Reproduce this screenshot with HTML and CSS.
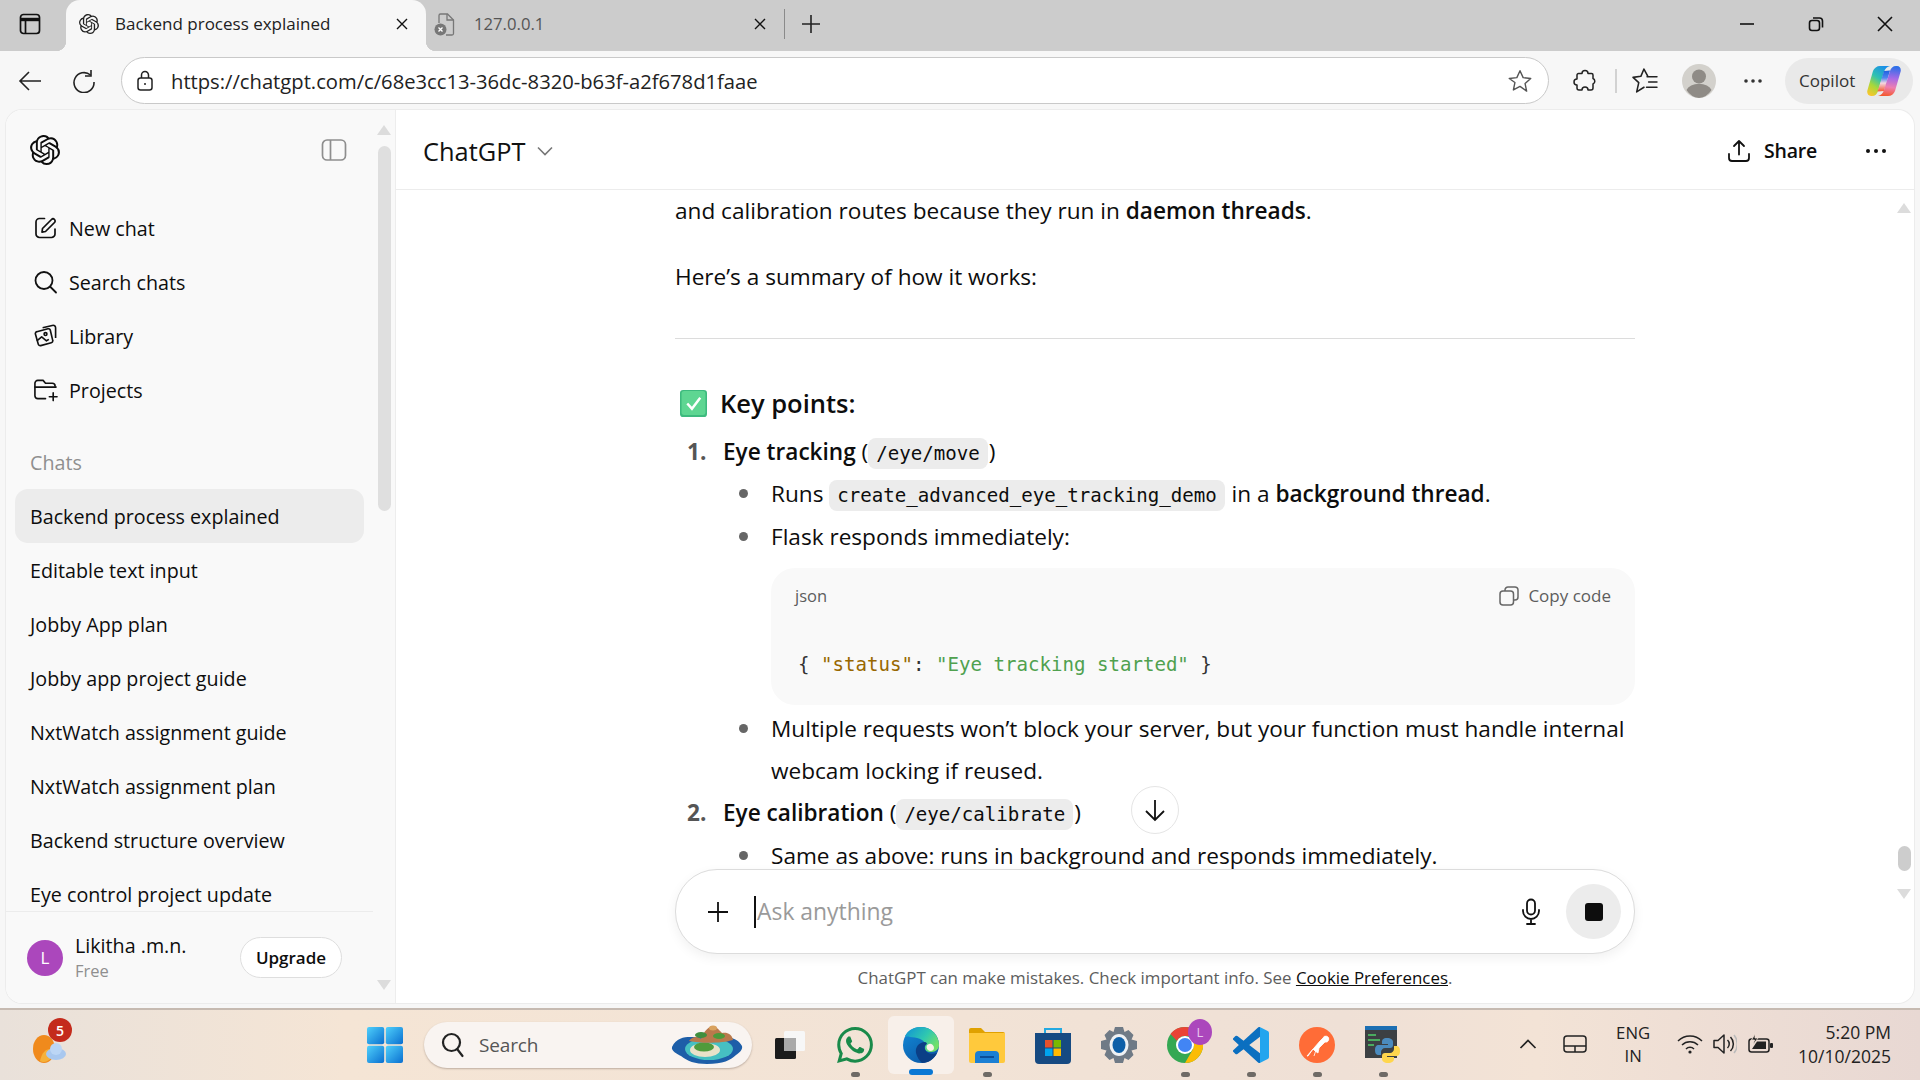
FILE: index.html
```html
<!DOCTYPE html>
<html lang="en">
<head>
<meta charset="utf-8">
<title>Backend process explained</title>
<link rel="stylesheet" href="styles.css">
</head>
<body>
<svg class="defs" width="0" height="0">
  <defs>
    <symbol id="blossom" viewBox="0 0 24 24"><path fill="currentColor" d="M22.2819 9.8211a5.9847 5.9847 0 0 0-.5157-4.9108 6.0462 6.0462 0 0 0-6.5098-2.9A6.0651 6.0651 0 0 0 4.9807 4.1818a5.9847 5.9847 0 0 0-3.9977 2.9 6.0462 6.0462 0 0 0 .7427 7.0966 5.98 5.98 0 0 0 .511 4.9107 6.051 6.051 0 0 0 6.5146 2.9001A5.9847 5.9847 0 0 0 13.2599 24a6.0557 6.0557 0 0 0 5.7718-4.2058 5.9894 5.9894 0 0 0 3.9977-2.9001 6.0557 6.0557 0 0 0-.7475-7.0729zm-9.022 12.6081a4.4755 4.4755 0 0 1-2.8764-1.0408l.1419-.0804 4.7783-2.7582a.7948.7948 0 0 0 .3927-.6813v-6.7369l2.02 1.1686a.071.071 0 0 1 .038.052v5.5826a4.504 4.504 0 0 1-4.4945 4.4944zm-9.6607-4.1254a4.4708 4.4708 0 0 1-.5346-3.0137l.142.0852 4.783 2.7582a.7712.7712 0 0 0 .7806 0l5.8428-3.3685v2.3324a.0804.0804 0 0 1-.0332.0615L9.74 19.9502a4.4992 4.4992 0 0 1-6.1408-1.6464zM2.3408 7.8956a4.485 4.485 0 0 1 2.3655-1.9728V11.6a.7664.7664 0 0 0 .3879.6765l5.8144 3.3543-2.0201 1.1685a.0757.0757 0 0 1-.071 0l-4.8303-2.7865A4.504 4.504 0 0 1 2.3408 7.872zm16.5963 3.8558L13.1038 8.364 15.1192 7.2a.0757.0757 0 0 1 .071 0l4.8303 2.7913a4.4944 4.4944 0 0 1-.6765 8.1042v-5.6772a.79.79 0 0 0-.407-.667zm2.0107-3.0231l-.142-.0852-4.7735-2.7818a.7759.7759 0 0 0-.7854 0L9.409 9.2297V6.8974a.0662.0662 0 0 1 .0284-.0615l4.8303-2.7866a4.4992 4.4992 0 0 1 6.6802 4.66zM8.3065 12.863l-2.02-1.1638a.0804.0804 0 0 1-.038-.0567V6.0742a4.4992 4.4992 0 0 1 7.3757-3.4537l-.142.0805L8.704 5.459a.7948.7948 0 0 0-.3927.6813zm1.0976-2.3654l2.602-1.4998 2.6069 1.4998v2.9994l-2.5974 1.4997-2.6067-1.4997Z"/></symbol>
  </defs>
</svg>

<header class="tabstrip">
  <svg class="tab-toggle" width="22" height="22" viewBox="0 0 22 22" fill="none" stroke="#111" stroke-width="1.7"><rect x="1.5" y="1.5" width="19" height="19" rx="3"/><path d="M1.5 6.5h19" stroke-width="3.4"/><path d="M6.5 6.5v14"/></svg>
  <div class="tab tab-active">
    <svg class="tab-favicon" width="20" height="20"><use href="#blossom"/></svg>
    <span class="tab-title">Backend process explained</span>
    <svg class="tab-close" width="14" height="14" viewBox="0 0 14 14" stroke="#111" stroke-width="1.4"><path d="M2 2l10 10M12 2L2 12"/></svg>
  </div>
  <div class="tab tab-idle">
    <svg class="tab-favicon" width="22" height="24" viewBox="0 0 22 24" fill="none"><path d="M5 11V3.5A1.5 1.5 0 0 1 6.500 2h7l6 6v13.500a1.500 1.500 0 0 1-1.500 1.500h-6" stroke="#777" stroke-width="1.300"/><path d="M13 2v6h6.500" stroke="#777" stroke-width="1.300"/><circle cx="6.500" cy="17.500" r="6" fill="#777"/><path d="M4.500 15.500l4 4m0-4l-4 4" stroke="#fff" stroke-width="1.300"/></svg>
    <span class="tab-title tab-title-idle">127.0.0.1</span>
    <svg class="tab-close" width="14" height="14" viewBox="0 0 14 14" stroke="#111" stroke-width="1.4"><path d="M2 2l10 10M12 2L2 12"/></svg>
  </div>
  <span class="tab-divider"></span>
  <svg class="tab-new" width="20" height="20" viewBox="0 0 20 20" stroke="#222" stroke-width="1.600"><path d="M10 1v18M1 10h18"/></svg>
  <div class="win-controls">
    <svg width="16" height="16" viewBox="0 0 16 16" stroke="#111" stroke-width="1.600"><path d="M1 8h14"/></svg>
    <svg width="16" height="16" viewBox="0 0 16 16" fill="none" stroke="#111" stroke-width="1.600"><rect x="1.500" y="4.500" width="10" height="10" rx="2.500"/><path d="M5 2h6.500A3 3 0 0 1 14.500 5v6.500"/></svg>
    <svg width="16" height="16" viewBox="0 0 16 16" stroke="#111" stroke-width="1.600"><path d="M1 1l14 14M15 1L1 15"/></svg>
  </div>
</header>

<nav class="toolbar">
  <svg class="tool-back" width="24" height="24" viewBox="0 0 24 24" fill="none" stroke="#222" stroke-width="1.600"><path d="M23 12H2M11 3l-9 9 9 9"/></svg>
  <svg class="tool-reload" width="24" height="24" viewBox="0 0 24 24" fill="none" stroke="#222" stroke-width="1.600"><path d="M18.500 6A10 10 0 1 0 22 13"/><path d="M19 1v6h-6"/></svg>
  <div class="address">
    <svg class="addr-lock" width="18" height="22" viewBox="0 0 18 22" fill="none" stroke="#222" stroke-width="1.500"><rect x="2" y="8" width="14" height="12" rx="2.500"/><path d="M5.500 8V5a3.500 3.500 0 0 1 7 0v3"/><circle cx="9" cy="14" r="1" fill="#222" stroke="none"/></svg>
    <span class="addr-url">https://chatgpt.com/c/68e3cc13-36dc-8320-b63f-a2f678d1faae</span>
    <svg class="addr-star" width="26" height="26" viewBox="0 0 24 24" fill="none" stroke="#555" stroke-width="1.300" stroke-linejoin="round"><path d="M12 2.500l2.900 6.400 7 .8-5.200 4.700 1.400 6.900L12 17l-6.100 3.300 1.400-6.900L2.100 9.700l7-.8z"/></svg>
  </div>
  <svg class="tool-puzzle" width="24" height="24" viewBox="0 0 24 24" fill="none" stroke="#222" stroke-width="1.500" stroke-linejoin="round"><path d="M9 4.500a3 3 0 0 1 6 0h3.500a1.500 1.500 0 0 1 1.500 1.500v3.500a3 3 0 0 1 0 5.500V19a2 2 0 0 1-2 2h-3a3 3 0 0 0-6 0H6a2 2 0 0 1-2-2v-3a3 3 0 0 1 0-6V6a1.500 1.500 0 0 1 1.500-1.500z"/></svg>
  <span class="tool-divider"></span>
  <svg class="tool-favs" width="26" height="26" viewBox="0 0 25 25" fill="none" stroke="#222" stroke-width="1.500" stroke-linejoin="round" stroke-linecap="round"><path d="M15 7.500L11.500 1 8.500 8 1 9l5.500 5L4.500 23l7-4.500"/><path d="M14.500 8.500H24M16 13.500h8M14 18.500h10"/></svg>
  <span class="tool-avatar">
    <svg width="34" height="34" viewBox="0 0 34 34"><circle cx="17" cy="17" r="17" fill="#d3d1cc"/><circle cx="17" cy="12.500" r="7" fill="#8f8b86"/><path d="M4.500 26a13 8.500 0 0 1 25 0A17 17 0 0 1 17 34 17 17 0 0 1 4.500 26z" fill="#8f8b86"/></svg>
  </span>
  <svg class="tool-more" width="20" height="6" viewBox="0 0 20 6" fill="#333"><circle cx="3" cy="3" r="1.800"/><circle cx="10" cy="3" r="1.800"/><circle cx="17" cy="3" r="1.800"/></svg>
  <div class="copilot">
    <span class="copilot-label">Copilot</span>
    <svg width="34" height="32" viewBox="0 0 34 32">
      <defs>
        <linearGradient id="cpA" x1=".7" y1="0" x2=".2" y2="1"><stop offset="0" stop-color="#1a8fe8"/><stop offset=".4" stop-color="#30c2b0"/><stop offset=".7" stop-color="#a8d83a"/><stop offset="1" stop-color="#f7c62b"/></linearGradient>
        <linearGradient id="cpB" x1=".5" y1="0" x2=".4" y2="1"><stop offset="0" stop-color="#2a6fe8"/><stop offset=".4" stop-color="#a86ae6"/><stop offset=".7" stop-color="#ee7fb0"/><stop offset="1" stop-color="#f4582f"/></linearGradient>
        <linearGradient id="cpC" x1=".5" y1="0" x2=".5" y2="1"><stop offset="0" stop-color="#1f5fe0"/><stop offset=".35" stop-color="#4f86ee"/><stop offset=".6" stop-color="#f5d6e2"/><stop offset="1" stop-color="#f4582f"/></linearGradient>
      </defs>
      <path d="M13 1h10c-3 .5-5 3-6 6L11 26c-.8 3-3 5-6 5H4c-3 0-4.500-3-3.500-6L6 6c1-3 4-5 7-5z" fill="url(#cpA)"/>
      <path d="M17 6l6-.5L17 26l-6.500.5z" fill="url(#cpC)"/>
      <path d="M21 31H11c3-.5 5-3 6-6L23 6c.8-3 3-5 6-5h1c3 0 4.500 3 3.500 6L28 26c-1 3-4 5-7 5z" fill="url(#cpB)"/>
    </svg>
  </div>
</nav>

<div class="app">
  <aside class="sidebar">
    <div class="side-body">
      <div class="side-head">
        <svg width="30" height="30" class="side-logo"><use href="#blossom"/></svg>
        <svg width="26" height="24" viewBox="0 0 26 24" fill="none" stroke="#8e8e8e" stroke-width="1.700"><rect x="1.500" y="2" width="23" height="20" rx="4.500"/><path d="M9.500 2v20"/></svg>
      </div>
      <ul class="side-nav">
        <li class="side-item"><svg width="24" height="24" viewBox="0 0 24 24" fill="none" stroke="#111" stroke-width="1.700" stroke-linecap="round" stroke-linejoin="round"><path d="M11 2.500H6A3.500 3.500 0 0 0 2.500 6v12A3.500 3.500 0 0 0 6 21.500h12a3.500 3.500 0 0 0 3.500-3.500v-5"/><path d="M9 12.500L18 3.500a2.100 2.100 0 0 1 3 3l-9 9-3.500.6z"/></svg><span>New chat</span></li>
        <li class="side-item"><svg width="24" height="24" viewBox="0 0 24 24" fill="none" stroke="#111" stroke-width="1.800" stroke-linecap="round"><circle cx="10.500" cy="10.500" r="8.500"/><path d="M17 17l5.500 5.500"/></svg><span>Search chats</span></li>
        <li class="side-item"><svg width="26" height="26" viewBox="0 0 26 26" fill="none" stroke="#111" stroke-width="1.700" stroke-linejoin="round"><path d="M4 8.500l11.500-3a2 2 0 0 1 2.500 1.500l2.500 10.500a2 2 0 0 1-1.500 2.500L8 23a2 2 0 0 1-2.500-1.500L2.500 11A2 2 0 0 1 4 8.500z"/><path d="M10 4.500L20 2c2-.5 3.500.5 3.500 2.500V15"/><circle cx="13" cy="11" r="1.500"/><path d="M4 18l5-4 5 4 2.500-1.500"/></svg><span>Library</span></li>
        <li class="side-item"><svg width="26" height="24" viewBox="0 0 26 24" fill="none" stroke="#111" stroke-width="1.700" stroke-linecap="round" stroke-linejoin="round"><path d="M13 21H5a3 3 0 0 1-3-3V5a3 3 0 0 1 3-3h5.500l2.500 3h7a3 3 0 0 1 3 3"/><path d="M2 9h22"/><path d="M21 15v8M17 19h8"/></svg><span>Projects</span></li>
      </ul>
      <div class="side-label">Chats</div>
      <ul class="side-chats">
        <li class="chat-item chat-active">Backend process explained</li>
        <li class="chat-item">Editable text input</li>
        <li class="chat-item">Jobby App plan</li>
        <li class="chat-item">Jobby app project guide</li>
        <li class="chat-item">NxtWatch assignment guide</li>
        <li class="chat-item">NxtWatch assignment plan</li>
        <li class="chat-item">Backend structure overview</li>
        <li class="chat-item">Eye control project update</li>
      </ul>
      <div class="side-user">
        <span class="user-avatar">L</span>
        <div class="user-meta">
          <span class="user-name">Likitha .m.n.</span>
          <span class="user-plan">Free</span>
        </div>
        <span class="upgrade">Upgrade</span>
      </div>
    </div>
    <div class="side-scroll">
      <span class="arrow-up"></span>
      <span class="side-thumb"></span>
      <span class="side-spacer"></span>
      <span class="arrow-down"></span>
    </div>
  </aside>

  <main class="main">
    <div class="main-head">
      <div class="model"><span>ChatGPT</span><svg width="16" height="10" viewBox="0 0 16 10" fill="none" stroke="#777" stroke-width="1.600"><path d="M1 1.500l7 7 7-7"/></svg></div>
      <div class="main-actions">
        <div class="share">
          <svg width="24" height="24" viewBox="0 0 24 24" fill="none" stroke="#111" stroke-width="1.800" stroke-linecap="round" stroke-linejoin="round"><path d="M12 15.500V2M7 7l5-5 5 5"/><path d="M2 15v4a3 3 0 0 0 3 3h14a3 3 0 0 0 3-3v-4"/></svg>
          <span>Share</span>
        </div>
        <svg width="22" height="6" viewBox="0 0 22 6" fill="#111"><circle cx="3" cy="3" r="2"/><circle cx="11" cy="3" r="2"/><circle cx="19" cy="3" r="2"/></svg>
      </div>
    </div>

    <article class="thread">
      <p class="para">and calibration routes because they run in <strong>daemon threads</strong>.</p>
      <p class="para para-next">Here’s a summary of how it works:</p>
      <hr class="rule">
      <h3 class="heading">
        <svg width="27" height="27" viewBox="0 0 26 26"><rect x="0" y="0" width="26" height="26" rx="3" fill="#3dba7e"/><rect x="1.500" y="1" width="23" height="23" rx="2.500" fill="#5ed692"/><path d="M7 13l4.500 5L19.500 7.500" fill="none" stroke="#fff" stroke-width="2.400"/></svg>
        <span>Key points:</span>
      </h3>
      <ol class="steps">
        <li class="step"><span class="step-num">1.</span><strong>Eye tracking</strong> (<code class="inline">/eye/move</code>)</li>
        <li class="bullet">Runs <code class="inline">create_advanced_eye_tracking_demo</code> in a <strong>background thread</strong>.</li>
        <li class="bullet bullet-gap">Flask responds immediately:</li>
        <li class="codeblock">
          <div class="code-head">
            <span>json</span>
            <span class="copy"><svg width="20" height="20" viewBox="0 0 20 20" fill="none" stroke="#666" stroke-width="1.500"><rect x="1" y="5" width="13.500" height="14" rx="3"/><path d="M6 5V4a3 3 0 0 1 3-3h6.500A3 3 0 0 1 19 4v7a3 3 0 0 1-3 3h-1.500"/></svg>Copy code</span>
          </div>
          <pre class="code"><span>{ </span><span class="c-key">"status"</span><span>: </span><span class="c-str">"Eye tracking started"</span><span> }</span></pre>
        </li>
        <li class="bullet bullet-after">Multiple requests won’t block your server, but your function must handle internal webcam locking if reused.</li>
        <li class="step"><span class="step-num">2.</span><strong>Eye calibration</strong> (<code class="inline">/eye/calibrate</code>)</li>
        <li class="bullet bullet-last">Same as above: runs in background and responds immediately.</li>
      </ol>
    </article>

    <div class="composer">
      <svg class="comp-plus" width="22" height="22" viewBox="0 0 22 22" stroke="#111" stroke-width="1.800"><path d="M11 1v20M1 11h20"/></svg>
      <span class="caret"></span>
      <span class="placeholder">Ask anything</span>
      <svg class="comp-mic" width="20" height="28" viewBox="0 0 20 28" fill="none" stroke="#111" stroke-width="1.800" stroke-linecap="round"><rect x="6" y="1.500" width="8" height="15" rx="4"/><path d="M2 12v1a8 8 0 0 0 16 0v-1M10 21v5M6 26h8"/></svg>
      <span class="stop"><span class="stop-square"></span></span>
    </div>
    <p class="disclaimer">ChatGPT can make mistakes. Check important info. See <a class="cookie">Cookie Preferences</a>.</p>

    <span class="jump"><svg width="22" height="24" viewBox="0 0 22 24" fill="none" stroke="#111" stroke-width="1.800"><path d="M11 2v20M2 13l9 9 9-9"/></svg></span>
    <div class="main-scroll">
      <span class="arrow-up"></span>
      <span class="main-track"></span>
      <span class="main-thumb"></span>
      <span class="main-gap"></span>
      <span class="arrow-down"></span>
    </div>
  </main>
</div>

<footer class="taskbar">
  <div class="weather">
    <svg width="34" height="32" viewBox="0 0 34 32"><ellipse cx="12" cy="17" rx="11" ry="14" fill="#f08a1c"/><path d="M12 30c5 0 9-5 10-12-5-3-12 0-14 11 1 .6 2.500 1 4 1z" fill="#f5b13a"/><ellipse cx="24" cy="22" rx="10" ry="6" fill="#a9c8ef"/><circle cx="24" cy="17" r="6" fill="#bcd6f5"/></svg>
    <span class="badge">5</span>
  </div>
  <svg class="start" width="36" height="36" viewBox="0 0 36 36"><defs><linearGradient id="win" x1="0" y1="0" x2="1" y2="1"><stop offset="0" stop-color="#4fd0fb"/><stop offset="1" stop-color="#0a6fd0"/></linearGradient></defs><rect x="0" y="0" width="17.200" height="17.200" rx="2" fill="url(#win)"/><rect x="18.800" y="0" width="17.200" height="17.200" rx="2" fill="url(#win)"/><rect x="0" y="18.800" width="17.200" height="17.200" rx="2" fill="url(#win)"/><rect x="18.800" y="18.800" width="17.200" height="17.200" rx="2" fill="url(#win)"/></svg>
  <div class="tb-search">
    <svg width="26" height="28" viewBox="0 0 26 28" fill="none" stroke="#222" stroke-width="2.200" stroke-linecap="round"><circle cx="11.500" cy="11.500" r="8.500"/><path d="M17.500 18.500l5 6.500"/></svg>
    <span class="tb-search-text">Search</span>
    <svg class="island" width="72" height="40" viewBox="0 0 72 40"><path d="M1 22c4-9 12-10 18-10h34c8 0 15 3 18 9 1 4-3 7-6 9-5 5-13 9-29 9-12 0-20-3-26-8-4-2-10-5-9-9z" fill="#1d5ea8"/><ellipse cx="38" cy="24" rx="24" ry="11" fill="#46c0c2"/><ellipse cx="34" cy="25" rx="15" ry="7" fill="#e9e2c9"/><ellipse cx="33" cy="22" rx="10" ry="4.500" fill="#4f9b3b"/><path d="M18 16c3-5 9-5 12-2 3-9 9-13 12-13 3 0 6 4 9 7 5-1 10 1 11 7-10 3-30 4-44 1z" fill="#b9794c"/><ellipse cx="30" cy="10" rx="6" ry="3" fill="#3f8f3e"/><ellipse cx="48" cy="11" rx="6" ry="3" fill="#4c9a3b"/><ellipse cx="42" cy="3" rx="4" ry="2.500" fill="#d9a25f"/></svg>
  </div>
  <svg class="task-view" width="30" height="28" viewBox="0 0 30 28"><rect x="9" y="0" width="21" height="20" rx="1.500" fill="#f7f7f7"/><rect x="0" y="7" width="21" height="21" rx="1.500" fill="#1b1b1b"/><rect x="9" y="7" width="12" height="13" fill="#a9a9a9"/></svg>
  <div class="tb-apps">
    <div class="tb-app">
      <svg width="36" height="36" viewBox="0 0 24 24"><path fill="#198a4a" d="M17.472 14.382c-.297-.149-1.758-.867-2.030-.967-.273-.099-.471-.148-.67.150-.197.297-.767.966-.940 1.164-.173.199-.347.223-.644.075-.297-.150-1.255-.463-2.390-1.475-.883-.788-1.480-1.761-1.653-2.059-.173-.297-.018-.458.130-.606.134-.133.298-.347.446-.520.149-.174.198-.298.298-.497.099-.198.050-.371-.025-.520-.075-.149-.669-1.612-.916-2.207-.242-.579-.487-.500-.669-.510-.173-.008-.371-.010-.570-.010-.198 0-.520.074-.792.372-.272.297-1.040 1.016-1.040 2.479 0 1.462 1.065 2.875 1.213 3.074.149.198 2.096 3.200 5.077 4.487.709.306 1.262.489 1.694.625.712.227 1.360.195 1.871.118.571-.085 1.758-.719 2.006-1.413.248-.694.248-1.289.173-1.413-.074-.124-.272-.198-.570-.347m-5.421 7.403h-.004a9.870 9.870 0 01-5.031-1.378l-.361-.214-3.741.982.998-3.648-.235-.374a9.860 9.860 0 01-1.510-5.260c.001-5.450 4.436-9.884 9.888-9.884 2.640 0 5.122 1.030 6.988 2.898a9.825 9.825 0 012.893 6.994c-.003 5.450-4.437 9.884-9.885 9.884m8.413-18.297A11.815 11.815 0 0012.050 0C5.495 0 .160 5.335.157 11.892c0 2.096.547 4.142 1.588 5.945L.057 24l6.305-1.654a11.882 11.882 0 005.683 1.448h.005c6.554 0 11.890-5.335 11.893-11.893a11.821 11.821 0 00-3.480-8.413Z"/></svg>
      <span class="tb-dot"></span>
    </div>
    <div class="tb-app tb-app-active">
      <svg width="36" height="36" viewBox="0 0 36 36"><defs><linearGradient id="edgeA" x1="0" y1="0" x2="1" y2=".6"><stop offset="0" stop-color="#0f90d8"/><stop offset=".6" stop-color="#2fc8b0"/><stop offset="1" stop-color="#72e06a"/></linearGradient><linearGradient id="edgeB" x1="0" y1="0" x2=".7" y2="1"><stop offset="0" stop-color="#128ad8"/><stop offset="1" stop-color="#0c5aa8"/></linearGradient></defs><circle cx="18" cy="18" r="18" fill="url(#edgeB)"/><path d="M2 9C5 3 11 0 18 0c11 0 18 9 18 18 0 4-3 7-8 7-4 0-7-2-6-5 1-3 0-5-3-7-6-4-14-2-17-4z" fill="url(#edgeA)"/><path d="M13 26c-1-6 3-11 9-11 1 0 2 1 2 2-2 1-3 3-2 5 1 4 6 6 12 4-3 6-8 10-15 10-3-3-5-6-6-10z" fill="#0b3f86"/><path d="M26 17a4 4 0 0 1 5 4c0 3-4 4-6 2s-2-5 1-6z" fill="#f8f0ea"/></svg>
      <span class="tb-bar"></span>
    </div>
    <div class="tb-app">
      <svg width="36" height="36" viewBox="0 0 36 36"><path d="M0 3a2 2 0 0 1 2-2h10l4 4h18a2 2 0 0 1 2 2v4H0z" fill="#e0a100"/><path d="M0 6h36v28a2 2 0 0 1-2 2H2a2 2 0 0 1-2-2z" fill="#ffc93c"/><path d="M6 36V28a4 4 0 0 1 4-4h16a4 4 0 0 1 4 4v8z" fill="#1b7fd4"/><rect x="11" y="29" width="14" height="2" fill="#0b4e99"/></svg>
      <span class="tb-dot"></span>
    </div>
    <div class="tb-app">
      <svg width="36" height="38" viewBox="0 0 36 38"><path d="M10 8V3h16v5" fill="none" stroke="#23a9e1" stroke-width="2"/><path d="M0 7h36v27a4 4 0 0 1-4 4H4a4 4 0 0 1-4-4z" fill="#164a82"/><rect x="10" y="14" width="7.500" height="7.500" fill="#e8512c"/><rect x="18.500" y="14" width="7.500" height="7.500" fill="#7ab800"/><rect x="10" y="22.500" width="7.500" height="7.500" fill="#00a4ef"/><rect x="18.500" y="22.500" width="7.500" height="7.500" fill="#ffb900"/></svg>
    </div>
    <div class="tb-app">
      <svg width="36" height="36" viewBox="0 0 36 36"><path d="M14 0h8l1.500 5 4-2 5 5-2 4.500L36 14v8l-5.500 1.500 2 4.500-5 5-4-2L22 36h-8l-1.500-5-4 2-5-5 2-4.500L0 22v-8l5.500-1.500-2-4.500 5-5 4 2z" fill="#6f7a86"/><ellipse cx="18" cy="18" rx="9.500" ry="11" fill="#eef1f4"/><ellipse cx="18" cy="18" rx="6.500" ry="8" fill="#0d5fa8"/></svg>
    </div>
    <div class="tb-app tb-app-chrome">
      <svg width="36" height="36" viewBox="0 0 36 36"><circle cx="18" cy="18" r="18" fill="#34a853"/><path d="M18 0a18 18 0 0 1 15.600 9H18a9 9 0 0 0-8 5L3.500 7A18 18 0 0 1 18 0z" fill="#ea4335"/><path d="M33.600 9A18 18 0 0 1 18 36l7.800-13.500A9 9 0 0 0 26 14z" fill="#fbbc04"/><circle cx="18" cy="18" r="9" fill="#fff"/><circle cx="18" cy="18" r="7" fill="#4285f4"/></svg>
      <span class="profile-badge">L</span>
      <span class="tb-dot"></span>
    </div>
    <div class="tb-app">
      <svg width="36" height="36" viewBox="0 0 24 24"><path fill="#23a5ee" d="M17 .3a1.500 1.500 0 0 1 1.200-.1l4.950 2.390A1.500 1.500 0 0 1 24 3.940v16.120a1.500 1.500 0 0 1-.85 1.350l-4.940 2.380a1.500 1.500 0 0 1-1.210.06l1-6.400V6.550z"/><path fill="#0b6fc0" d="M16.500.5a1.500 1.500 0 0 1 1.500-.4V6.550L10.830 12l7.170 5.450V23.900a1.500 1.500 0 0 1-1.500-.4l-9.460-8.630-4.120 3.130a1 1 0 0 1-1.270-.06L.33 16.740a1 1 0 0 1 0-1.480L3.900 12 .33 8.740a1 1 0 0 1 0-1.480L1.650 6.060a1 1 0 0 1 1.270-.06l4.120 3.130z"/></svg>
      <span class="tb-dot"></span>
    </div>
    <div class="tb-app">
      <svg width="36" height="36" viewBox="0 0 36 36"><circle cx="18" cy="18" r="18" fill="#ff6c37"/><path d="M8 29l7-8 6-7 3-3a3 3 0 1 1 2 4l-6 6-1 5-3-2-2-2-5 7zM18 20l-3 9" fill="#fff" stroke="#fff" stroke-width=".8"/></svg>
      <span class="tb-dot"></span>
    </div>
    <div class="tb-app">
      <svg width="36" height="38" viewBox="0 0 36 38"><rect x="0" y="0" width="32" height="32" fill="#3c4043"/><rect x="0" y="0" width="32" height="4" fill="#1c6fb3"/><path d="M3 9h8M3 14h12M3 19h6" stroke="#4fcf6a" stroke-width="1.500"/><path d="M22 12c-4 0-5 2-5 4v2h6v1h-9c-3 0-4 2-4 5s1 5 4 5h2v-3c0-2 2-4 4-4h5c2 0 3-1 3-3v-3c0-2-2-4-6-4z" fill="#4b8bbe"/><path d="M23 37c4 0 6-2 6-4v-2h-7v-1h9c3 0 4-2 4-5s-1-5-4-5h-2v3c0 2-2 4-4 4h-5c-2 0-3 1-3 3v3c0 2 2 4 6 4z" fill="#ffd64d"/></svg>
      <span class="tb-dot"></span>
    </div>
  </div>
  <div class="tray">
    <svg class="tray-chev" width="18" height="10" viewBox="0 0 18 10" fill="none" stroke="#222" stroke-width="1.700"><path d="M1.500 9L9 1.500 16.500 9"/></svg>
    <svg class="tray-pad" width="24" height="20" viewBox="0 0 24 20" fill="none" stroke="#222" stroke-width="1.500"><rect x="1" y="2" width="22" height="16" rx="3"/><path d="M1 12h22M12 12v6"/></svg>
    <div class="tray-lang"><span>ENG</span><span>IN</span></div>
    <svg class="tray-wifi" width="26" height="20" viewBox="0 0 26 20" fill="none" stroke="#222" stroke-width="1.500"><path d="M1 7a17 17 0 0 1 24 0M5 11a11.500 11.500 0 0 1 16 0M9 15a5.500 5.500 0 0 1 8 0"/><circle cx="13" cy="18" r="1.600" fill="#222" stroke="none"/></svg>
    <svg class="tray-vol" width="24" height="22" viewBox="0 0 24 22" fill="none" stroke="#222" stroke-width="1.500"><path d="M1 7.500h4L11 2v18l-6-5.500H1z" stroke-linejoin="round"/><path d="M14.500 7a5.500 5.500 0 0 1 0 8M17.500 4a10 10 0 0 1 0 14"/><path d="M21 2a14 14 0 0 1 0 18" stroke="#bbb"/></svg>
    <svg class="tray-batt" width="26" height="22" viewBox="0 0 26 22"><rect x="1" y="6" width="20" height="13" rx="2.500" fill="none" stroke="#222" stroke-width="1.500"/><path d="M4 16l5-7.500h9V16z" fill="#222"/><rect x="22" y="10" width="3" height="5" rx="1" fill="#222"/><path d="M7 1L3.500 7h3L5 12l5-7H7z" fill="#222" stroke="#f0e0d6" stroke-width=".8"/></svg>
    <div class="tray-clock"><span>5:20 PM</span><span>10/10/2025</span></div>
  </div>
</footer>
</body>
</html>
```
FILE: styles.css
```css
* { box-sizing: border-box; }
html, body { margin: 0; padding: 0; }
body {
  width: 1920px;
  height: 1080px;
  overflow: hidden;
  display: flex;
  flex-direction: column;
  background: #f7f7f7;
  color: #0d0d0d;
  font-family: "Open Sans", "Noto Sans", sans-serif;
}
ul, ol { list-style: none; margin: 0; padding: 0; }
.defs { position: absolute; }

/* Tab strip */
.tabstrip {
  height: 51px;
  flex: none;
  display: flex;
  align-items: center;
  background: #cccccc;
}
.tab-toggle { margin: 0 25px 4px 19px; flex: none; }
.tab {
  position: relative;
  height: 51px;
  display: flex;
  align-items: center;
  flex: none;
  padding-bottom: 4px;
}
.tab-active {
  width: 360px;
  padding-left: 13px;
  background: #f7f7f7;
  border-radius: 14px 14px 0 0;
  color: #222;
}
.tab-active::after {
  content: "";
  position: absolute;
  right: -10px;
  bottom: 0;
  width: 10px;
  height: 10px;
  background: radial-gradient(circle at 100% 0, transparent 10px, #f7f7f7 10.5px);
}
.tab-active::before {
  content: "";
  position: absolute;
  left: -10px;
  bottom: 0;
  width: 10px;
  height: 10px;
  background: radial-gradient(circle at 0 0, transparent 10px, #f7f7f7 10.5px);
}
.tab-favicon { flex: none; }
.tab-title { margin-left: 16px; font-size: 17px; white-space: nowrap; flex: 1; }
.tab-close { flex: none; margin-right: 17px; }
.tab-idle { width: 358px; padding-left: 8px; color: #555; }
.tab-title-idle { margin-left: 18px; font-size: 16.700px; }
.tab-divider { width: 1px; height: 30px; background: #8a8a8a; flex: none; margin: 0 0 4px 0; }
.tab-new { margin: 0 0 4px 16px; flex: none; }
.win-controls {
  margin: 0 0 4px auto;
  width: 181px;
  padding-right: 27px;
  display: flex;
  justify-content: space-between;
  align-items: center;
}

/* Toolbar */
.toolbar {
  height: 59px;
  flex: none;
  display: flex;
  align-items: center;
  background: #f7f7f7;
}
.tool-back { margin-left: 18px; flex: none; }
.tool-reload { margin-left: 30px; flex: none; }
.address {
  width: 1428px;
  height: 47px;
  margin-left: 25px;
  flex: none;
  display: flex;
  align-items: center;
  padding: 0 15px 0 14px;
  background: #fff;
  border: 1.500px solid #c9c9c9;
  border-radius: 24px;
}
.addr-lock { flex: none; }
.addr-url { margin-left: 17px; font-size: 20.200px; color: #222; }
.addr-star { margin-left: auto; flex: none; }
.tool-puzzle { margin-left: 24px; flex: none; }
.tool-divider { width: 2px; height: 24px; background: #d2d2d2; margin-left: 18px; flex: none; }
.tool-favs { margin-left: 15px; flex: none; }
.tool-avatar { margin-left: 24px; width: 34px; height: 34px; flex: none; display: flex; }
.tool-more { margin-left: 27px; flex: none; }
.copilot {
  margin-left: 22px;
  width: 128px;
  height: 46px;
  flex: none;
  display: flex;
  align-items: center;
  gap: 12px;
  padding-left: 14px;
  background: #e9e9e9;
  border-radius: 23px;
  color: #333;
  font-size: 17px;
}

/* App card */
.app {
  flex: none;
  height: 893px;
  margin: 0 6px 0 6px;
  display: flex;
  background: #fff;
  box-shadow: 0 0 0 1px #ececec;
  border-radius: 16px;
  overflow: hidden;
}
.sidebar {
  width: 390px;
  flex: none;
  position: relative;
  background: #f9f9f9;
  border-right: 1px solid #ededed;
}
.side-body {
  width: 367px;
  height: 100%;
  display: flex;
  flex-direction: column;
}
.side-head {
  height: 80px;
  flex: none;
  display: flex;
  align-items: center;
  justify-content: space-between;
  padding: 0 26px 0 24px;
  color: #111;
}
.side-logo { color: #0d0d0d; }
.side-nav { margin-top: 11px; padding-left: 9px; }
.side-item {
  height: 54px;
  display: flex;
  align-items: center;
  gap: 11px;
  padding-left: 18px;
  font-size: 19.700px;
}
.side-item svg { flex: none; width: 25px; }
.side-label {
  height: 54px;
  margin-top: 18px;
  flex: none;
  display: flex;
  align-items: center;
  padding-left: 24px;
  font-size: 19.700px;
  color: #8f8f8f;
}
.side-chats { flex: 1; min-height: 0; overflow: hidden; padding: 0 9px; }
.chat-item {
  height: 54px;
  display: flex;
  align-items: center;
  padding-left: 15px;
  border-radius: 13px;
  font-size: 19.700px;
  white-space: nowrap;
}
.chat-active { background: #ececec; }
.side-user {
  height: 92px;
  flex: none;
  display: flex;
  align-items: center;
  padding: 0 31px 0 21px;
  border-top: 1px solid #ececec;
}
.user-avatar {
  width: 36px;
  height: 36px;
  flex: none;
  display: flex;
  align-items: center;
  justify-content: center;
  border-radius: 50%;
  background: #ab47bc;
  color: #fff;
  font-size: 17px;
}
.user-meta { margin-left: 12px; display: flex; flex-direction: column; }
.user-name { font-size: 19.700px; line-height: 26px; }
.user-plan { font-size: 16.500px; line-height: 24px; color: #8f8f8f; }
.upgrade {
  margin-left: auto;
  width: 102px;
  height: 41px;
  display: flex;
  align-items: center;
  justify-content: center;
  background: #fff;
  border: 1px solid #dedede;
  border-radius: 21px;
  font-size: 17px;
  font-weight: 600;
}
.side-scroll {
  position: absolute;
  top: 15px;
  bottom: 13px;
  right: 4px;
  width: 14px;
  display: flex;
  flex-direction: column;
  align-items: center;
}
.side-thumb { width: 13px; height: 365px; margin-top: 11px; background: #dfdfdf; border-radius: 7px; flex: none; }
.side-spacer { flex: 1; }
.arrow-up {
  width: 0; height: 0; flex: none;
  border-left: 7px solid transparent;
  border-right: 7px solid transparent;
  border-bottom: 10px solid #dcdcdc;
}
.arrow-down {
  width: 0; height: 0; flex: none;
  border-left: 7px solid transparent;
  border-right: 7px solid transparent;
  border-top: 10px solid #dcdcdc;
}

/* Main */
.main {
  flex: 1;
  min-width: 0;
  position: relative;
  display: flex;
  flex-direction: column;
  align-items: center;
}
.main-head {
  width: 100%;
  height: 80px;
  flex: none;
  display: flex;
  align-items: center;
  justify-content: space-between;
  padding: 2px 27px 0 27px;
  border-bottom: 1px solid #ececec;
}
.model { display: flex; align-items: center; gap: 12px; font-size: 25.400px; color: #111; }
.main-actions { display: flex; align-items: center; gap: 48px; }
.share { display: flex; align-items: center; gap: 13px; font-size: 19.500px; font-weight: 600; letter-spacing: -0.200px; }

.thread {
  width: 960px;
  height: 679px;
  flex: none;
  font-size: 22.600px;
  line-height: 42px;
  color: #0d0d0d;
}
.thread strong { font-weight: 600; }
.para { margin: 0; }
.para-next { margin-top: 24px; }
.rule { margin: 40px 0 0; border: 0; border-top: 1px solid #dcdcdc; height: 1px; }
.heading {
  margin: 43px 0 7px 5px;
  height: 42px;
  display: flex;
  align-items: center;
  gap: 13px;
  font-size: 25.500px;
  font-weight: 600;
}
.step { position: relative; padding-left: 48px; white-space: nowrap; }
.step-num {
  position: absolute;
  left: 12px;
  top: 0;
  font-weight: 700;
  color: #555;
}
.inline {
  display: inline-block;
  height: 31px;
  line-height: 31px;
  margin: 0 1px 0 0;
  padding: 0 8px;
  background: #ececec;
  border-radius: 8px;
  font-family: "DejaVu Sans Mono", "Liberation Mono", monospace;
  font-size: 19.100px;
  font-weight: 400;
}
.bullet { position: relative; padding-left: 96px; }
.bullet::before {
  content: "";
  position: absolute;
  left: 64px;
  top: 16px;
  width: 9px;
  height: 9px;
  border-radius: 50%;
  background: #666;
}
.bullet-gap { margin-top: 1px; }
.bullet-after { margin-top: 3px; }
.bullet-last { margin-top: 9px; line-height: 26px; }
.bullet-last::before { top: 8px; }
.codeblock {
  margin: 10px 0 0 96px;
  height: 137px;
  background: #f9f9f9;
  border-radius: 24px;
  padding: 0 24px;
}
.code-head {
  height: 56px;
  display: flex;
  align-items: center;
  justify-content: space-between;
  font-size: 16.500px;
  color: #5d5d5d;
}
.copy { display: flex; align-items: center; gap: 9px; font-size: 17px; }
.code {
  margin: 19px 0 0 3px;
  font-family: "DejaVu Sans Mono", "Liberation Mono", monospace;
  font-size: 19.100px;
  line-height: 44px;
  color: #333;
}
.c-key { color: #986801; }
.c-str { color: #50a14f; }

.composer {
  width: 960px;
  height: 85px;
  flex: none;
  display: flex;
  align-items: center;
  padding: 0 13px 0 31px;
  background: #fff;
  border: 1px solid #dcdcdc;
  border-radius: 42px;
  box-shadow: 0 4px 12px rgba(0,0,0,.06);
  position: relative;
}
.comp-plus { flex: none; }
.caret { width: 2px; height: 32px; background: #111; margin-left: 25px; flex: none; }
.placeholder { margin-left: 1px; font-size: 22.900px; color: #9a9a9a; }
.comp-mic { margin-left: auto; flex: none; }
.stop {
  margin-left: 25px;
  width: 55px;
  height: 55px;
  flex: none;
  display: flex;
  align-items: center;
  justify-content: center;
  border-radius: 50%;
  background: #ececec;
}
.stop-square { width: 18px; height: 18px; background: #0d0d0d; border-radius: 3px; }
.disclaimer {
  margin: 0;
  height: 47px;
  flex: none;
  display: flex;
  align-items: center;
  justify-content: center;
  white-space: pre;
  font-size: 16.900px;
  color: #5d5d5d;
}
.cookie { color: #0d0d0d; text-decoration: underline; }

.jump {
  position: absolute;
  top: 676px;
  left: 50%;
  margin-left: -24px;
  width: 48px;
  height: 48px;
  display: flex;
  align-items: center;
  justify-content: center;
  background: #fff;
  border: 1px solid #e5e5e5;
  border-radius: 50%;
}
.main-scroll {
  position: absolute;
  top: 93px;
  right: 3px;
  width: 14px;
  display: flex;
  flex-direction: column;
  align-items: center;
}
.main-track { height: 633px; flex: none; }
.main-thumb { width: 13px; height: 25px; background: #cdcdcd; border-radius: 7px; flex: none; }
.main-gap { height: 18px; flex: none; }

/* Taskbar */
.taskbar {
  margin-top: 5px;
  flex: 1;
  min-height: 0;
  position: relative;
  display: flex;
  align-items: center;
  border-top: 2px solid #c6bab1;
  background: linear-gradient(90deg, #e9e1da 0%, #f5e5d5 18%, #f2e3d6 50%, #efe0d6 70%, #f3e3d6 80%, #e8d8d3 100%);
}
.weather { position: relative; margin-left: 32px; width: 36px; height: 38px; flex: none; display: flex; align-items: flex-end; }
.badge {
  position: absolute;
  top: -8px;
  right: -4px;
  width: 24px;
  height: 24px;
  display: flex;
  align-items: center;
  justify-content: center;
  border-radius: 50%;
  background: #c42b1c;
  color: #fff;
  font-size: 14px;
  font-weight: 600;
}
.start { margin-left: 299px; flex: none; }
.tb-search {
  margin-left: 21px;
  width: 328px;
  height: 46px;
  flex: none;
  display: flex;
  align-items: center;
  padding-left: 16px;
  background: #f9f4f1;
  border-radius: 23px;
  box-shadow: 0 1px 2px rgba(90,70,60,.35);
}
.tb-search-text { margin-left: 13px; font-size: 19px; color: #555; letter-spacing: -0.150px; }
.island { margin-left: auto; margin-right: 9px; flex: none; }
.task-view { margin-left: 23px; flex: none; }
.tb-apps { margin-left: 17px; display: flex; flex: none; }
.tb-app {
  position: relative;
  width: 66px;
  height: 58px;
  flex: none;
  display: flex;
  align-items: center;
  justify-content: center;
}
.tb-app-active { background: #f8f0ea; border-radius: 6px; }
.tb-dot {
  position: absolute;
  bottom: -3px;
  left: 50%;
  margin-left: -4px;
  width: 9px;
  height: 5px;
  border-radius: 3px;
  background: #6e6a66;
}
.tb-bar {
  position: absolute;
  bottom: -1px;
  left: 50%;
  margin-left: -12px;
  width: 24px;
  height: 6px;
  border-radius: 3px;
  background: #0a78d4;
}
.profile-badge {
  position: absolute;
  top: 3px;
  right: 6px;
  width: 24px;
  height: 26px;
  display: flex;
  align-items: center;
  justify-content: center;
  border-radius: 50%;
  background: #ab47bc;
  color: #e8c9ee;
  font-size: 13px;
}
.tray {
  margin-left: auto;
  height: 100%;
  display: flex;
  align-items: center;
  padding: 0 29px 2px 0;
  flex: none;
  color: #222;
}
.tray-chev { flex: none; }
.tray-pad { margin-left: 26px; flex: none; }
.tray-lang {
  margin-left: 24px;
  width: 44px;
  display: flex;
  flex-direction: column;
  align-items: center;
  font-size: 16.700px;
  line-height: 23px;
}
.tray-wifi { margin-left: 22px; flex: none; }
.tray-vol { margin-left: 10px; flex: none; }
.tray-batt { margin-left: 11px; flex: none; }
.tray-clock {
  margin-left: 24px;
  display: flex;
  flex-direction: column;
  align-items: flex-end;
  font-size: 17.500px;
  line-height: 24px;
}
```
